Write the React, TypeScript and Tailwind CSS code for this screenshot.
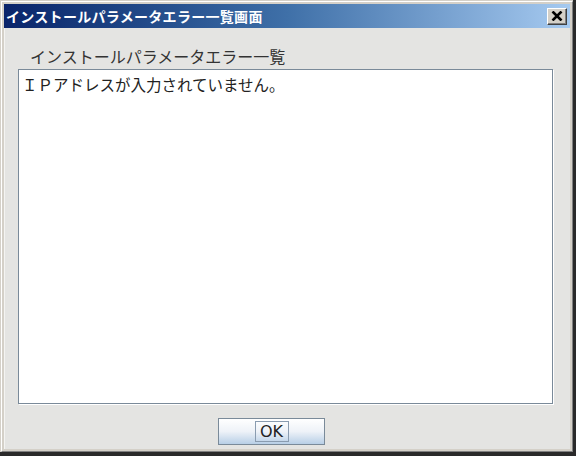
import React from "react";

export default function App() {
  return (
    <div className="w-[576px] h-[456px] overflow-hidden bg-[#2a2a2a]">
      <div className="w-[573px] h-[452px] flex flex-col border-l border-t border-[#d4d0c8] bg-[#d4d0c8]">
        <div className="flex-1 flex flex-col border-l border-t border-white border-r border-b border-r-[#808080] border-b-[#808080] p-[2px]">
          {/* title bar */}
          <div className="h-[24px] flex items-center pl-[2px] pr-[3px] bg-gradient-to-r from-[#0a246a] via-[#3f70a8] to-[#a6caf0]">
            <span
              className="flex-1 text-white font-bold text-[14px] leading-none tracking-[0.3px]"
              style={{ fontFamily: '"Noto Sans CJK JP", sans-serif' }}
            >
              インストールパラメータエラー一覧画面
            </span>
            <div className="w-[20px] h-[17px] flex items-center justify-center bg-[#d4d0c8] border-t border-l border-white border-r border-b border-r-[#404040] border-b-[#404040] shadow-[inset_-1px_-1px_0_#808080]">
              <svg width="12" height="10" viewBox="0 0 12 10">
                <path d="M1.5 0.5 L10.5 9.5 M10.5 0.5 L1.5 9.5" stroke="#000" strokeWidth="2.6" />
              </svg>
            </div>
          </div>
          {/* content */}
          <div className="flex-1 flex flex-col bg-[#e4e4e2] border-l border-[#f4f4f2] pl-[13px] pr-[17px]">
            <div
              className="h-[41px] pt-[18px] pl-[12px] text-[16px] leading-[20px] text-[#333]"
              style={{ fontFamily: '"Noto Sans CJK JP", sans-serif' }}
            >
              インストールパラメータエラー一覧
            </div>
            <div className="h-[335px] border border-[#7a8a99] bg-white shadow-[1px_1px_0_#ffffff] px-[3px] pt-[4px]">
              <div
                className="text-[15.5px] leading-[20px] text-[#222]"
                style={{ fontFamily: '"Noto Sans CJK JP", sans-serif' }}
              >
                ＩＰアドレスが入力されていません。
              </div>
            </div>
            <div className="flex pt-[14px] pl-[200px]">
              <div className="w-[107px] h-[27px] border border-[#7a8a99] bg-gradient-to-b from-[#ffffff] via-[#eef2f8] to-[#b8cfe6] flex items-center justify-center">
                <div
                  className="w-[34px] h-[21px] border border-[#8a9cb0] flex items-center justify-center text-[16px] leading-none text-[#222]"
                  style={{ fontFamily: '"DejaVu Sans", sans-serif' }}
                >
                  OK
                </div>
              </div>
            </div>
          </div>
        </div>
      </div>
    </div>
  );
}
